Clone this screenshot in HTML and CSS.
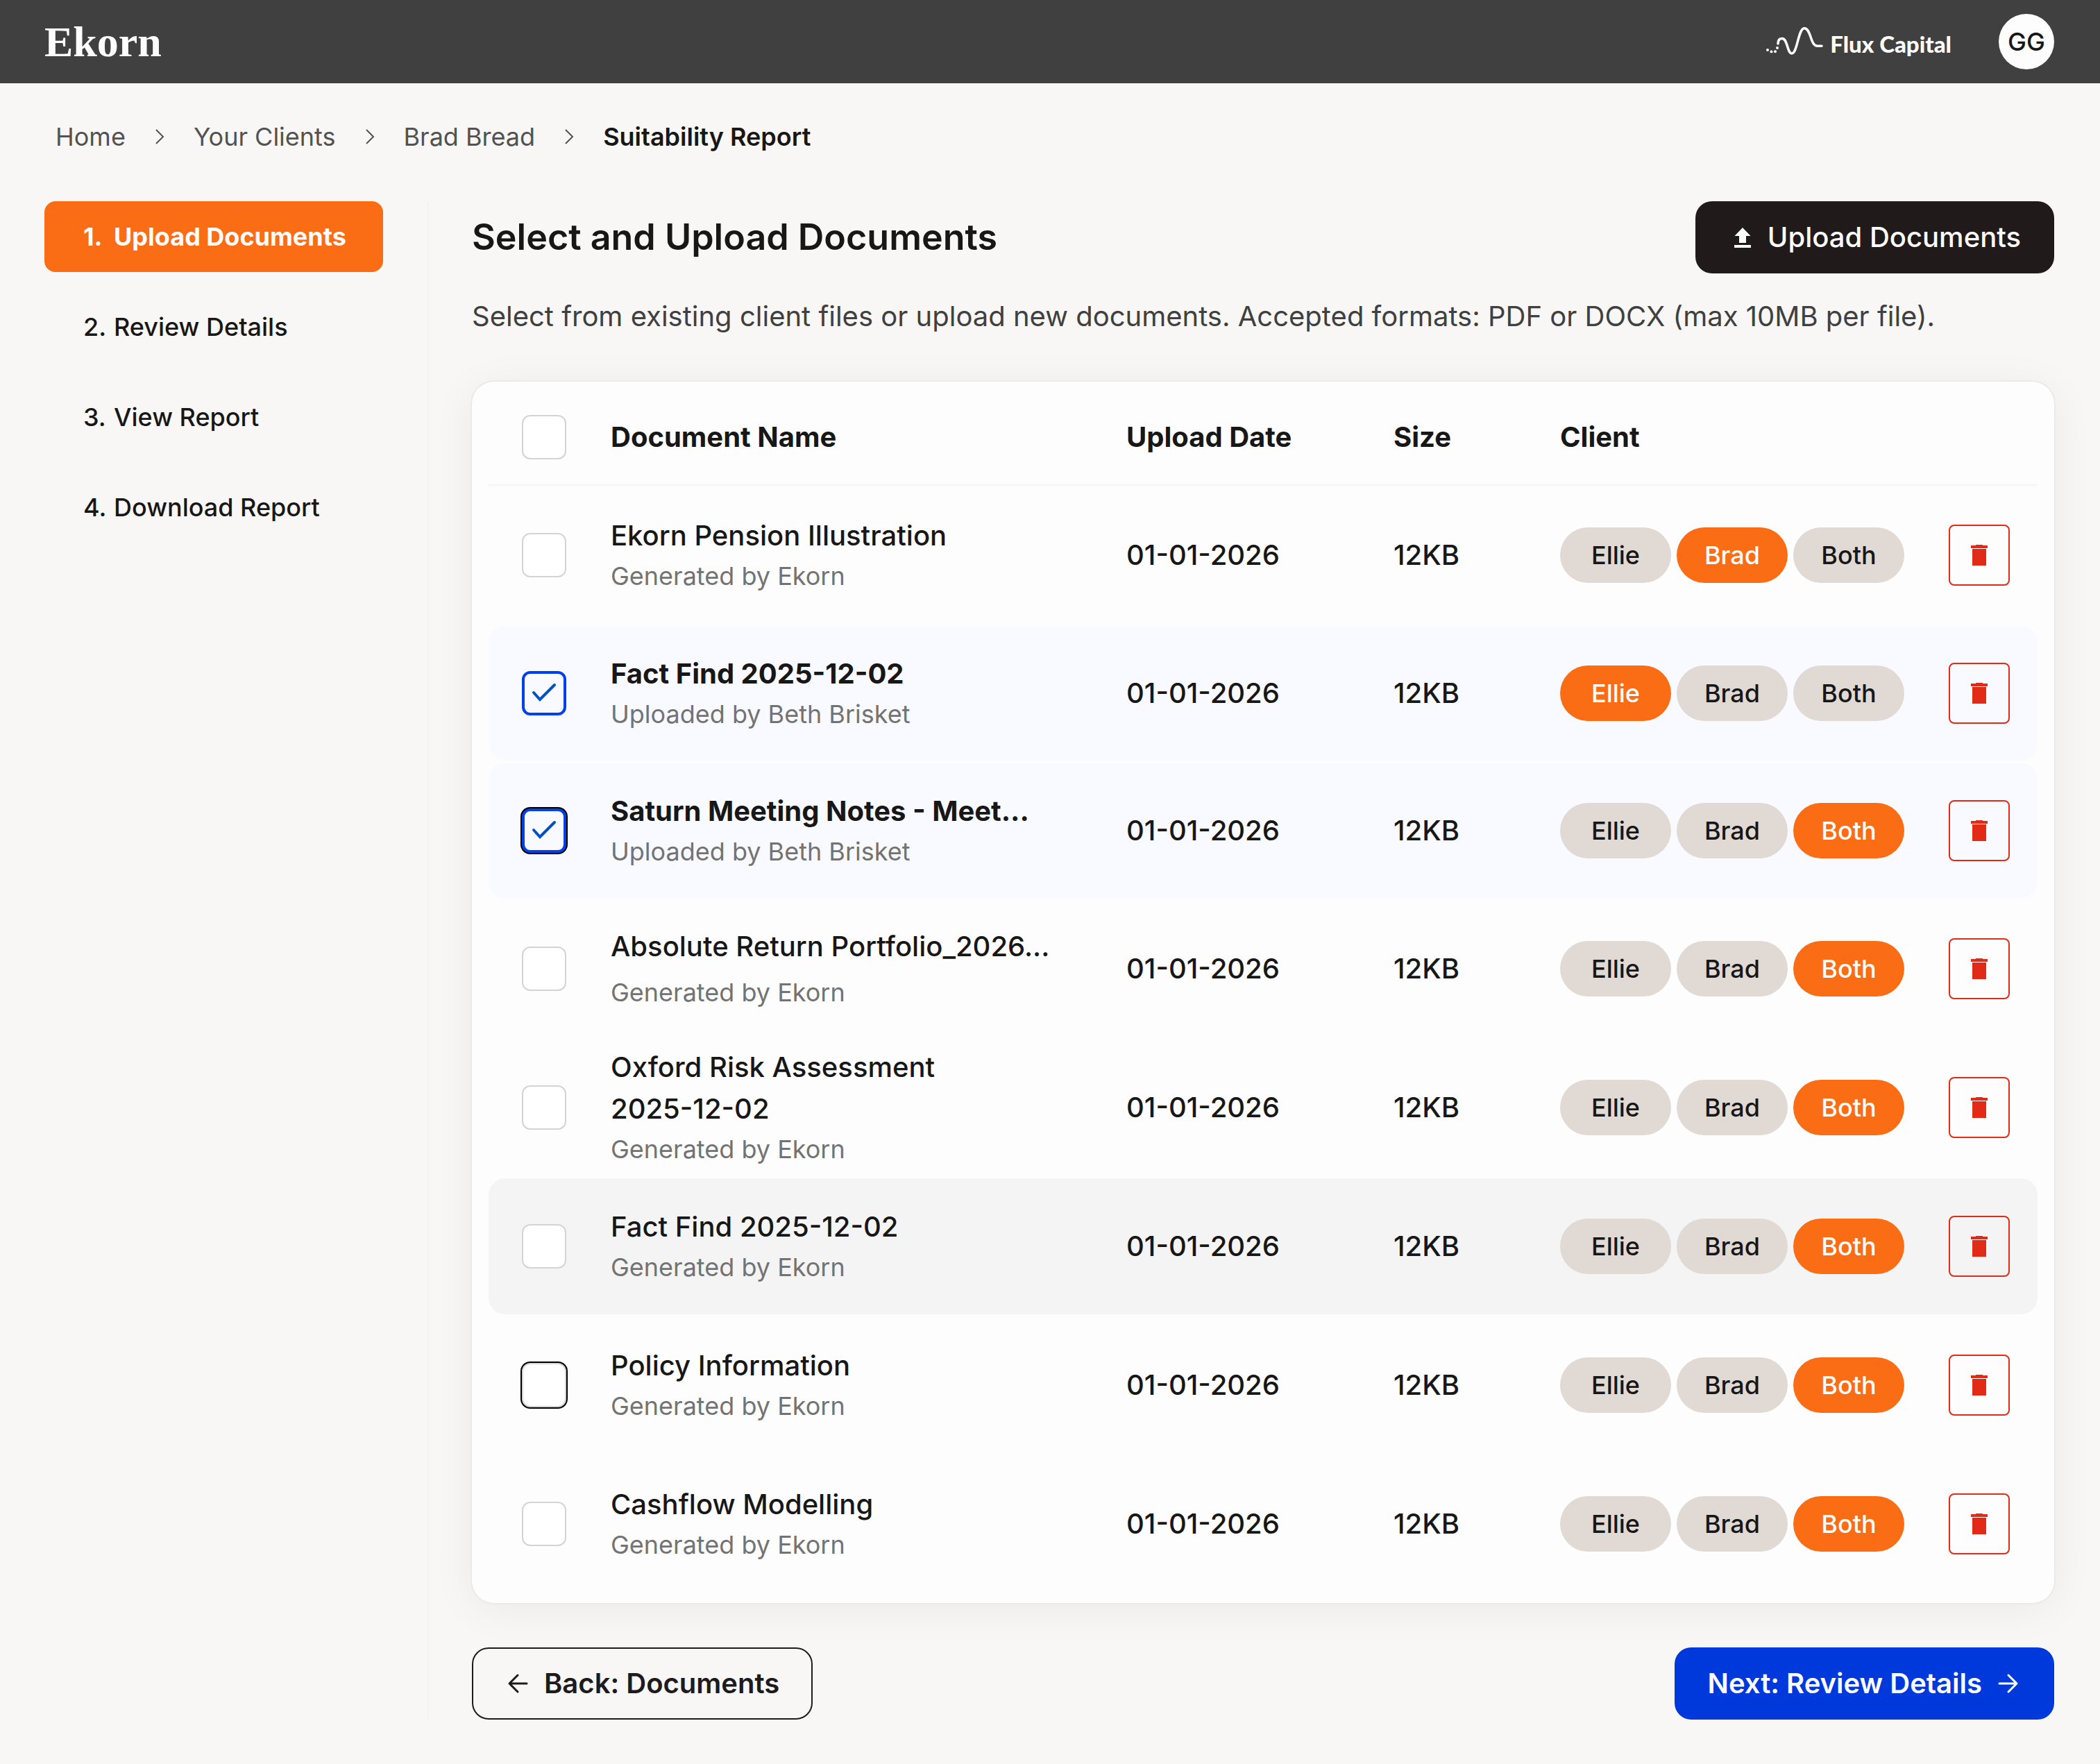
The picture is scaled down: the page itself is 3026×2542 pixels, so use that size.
FILE: index.html
```html
<!DOCTYPE html>
<html lang="en">
<head>
<meta charset="utf-8">
<title>Suitability Report - Ekorn</title>
<meta name="viewport" content="width=device-width, initial-scale=1">
<link rel="stylesheet" href="styles.css">
</head>
<body>
<svg class="sprite" aria-hidden="true">
  <symbol id="chevron" viewBox="0 0 32 32"><path d="M11 6l10 10-10 10" fill="none" stroke="currentColor" stroke-width="2"/></symbol>
  <symbol id="trash" viewBox="0 0 24 30"><path d="M7 0h10v1h7v4H0V1h7zM2 6h20v24H2z" fill="currentColor"/></symbol>
  <symbol id="upload" viewBox="0 0 40 40"><path d="M20 6l11.5 12H25v10H15V18H8.500zM8 31h24v4H8z" fill="currentColor"/></symbol>
  <symbol id="arrow" viewBox="0 0 40 40"><path d="M9 20h24M22 8l12 12-12 12" fill="none" stroke="currentColor" stroke-width="3" stroke-linecap="round" stroke-linejoin="round"/></symbol>
</svg>

<header class="topbar">
  <a class="brand" href="#">Ekorn</a>
  <div class="account">
    <a class="firm" href="#">
      <svg class="firm-mark" viewBox="0 0 82 40" aria-hidden="true">
        <path d="M17 27C17 21 20 19.500 23 19.500C31 19.500 30 41 37 41C45 41 46 4.700 55 4.700C65 4.700 63 30.300 74 30.300H80" fill="none" stroke="currentColor" stroke-width="3.500" stroke-linecap="round"/>
        <g fill="currentColor"><circle cx="2" cy="36" r="2"/><circle cx="7.500" cy="38.500" r="2"/><circle cx="13" cy="38.300" r="2"/><circle cx="16" cy="33" r="2"/></g>
      </svg>
      <span>Flux Capital</span>
    </a>
    <button class="avatar" type="button" aria-label="Account GG">GG</button>
  </div>
</header>

<nav class="crumbs" aria-label="Breadcrumb">
  <a href="#">Home</a>
  <svg class="chevron"><use href="#chevron"/></svg>
  <a href="#">Your Clients</a>
  <svg class="chevron"><use href="#chevron"/></svg>
  <a href="#">Brad Bread</a>
  <svg class="chevron"><use href="#chevron"/></svg>
  <a class="current" href="#" aria-current="page">Suitability Report</a>
</nav>

<div class="layout">
  <nav class="steps" aria-label="Steps">
    <a class="step active" href="#"><span class="number">1.</span>Upload Documents</a>
    <a class="step" href="#"><span class="number">2.</span>Review Details</a>
    <a class="step" href="#"><span class="number">3.</span>View Report</a>
    <a class="step" href="#"><span class="number">4.</span>Download Report</a>
  </nav>

  <main class="content">
    <div class="title-row">
      <h1>Select and Upload Documents</h1>
      <button class="button dark" type="button"><svg class="icon"><use href="#upload"/></svg>Upload Documents</button>
    </div>
    <p class="intro">Select from existing client files or upload new documents. Accepted formats: PDF or DOCX (max 10MB per file).</p>

    <section class="card">
      <table class="documents">
        <colgroup><col class="col-check"><col><col class="col-date"><col class="col-size"><col class="col-client"><col class="col-delete"></colgroup>
        <thead>
          <tr>
            <th><input class="check" type="checkbox" aria-label="Select all documents"></th>
            <th scope="col">Document Name</th>
            <th scope="col">Upload Date</th>
            <th scope="col">Size</th>
            <th scope="col">Client</th>
            <th></th>
          </tr>
        </thead>
        <tbody>
          <tr>
            <td><input class="check" type="checkbox" id="doc1"></td>
            <td><label class="name" for="doc1">Ekorn Pension Illustration</label><span class="source">Generated by Ekorn</span></td>
            <td>01-01-2026</td><td>12KB</td>
            <td><div class="pills"><button class="pill" type="button">Ellie</button><button class="pill on" type="button">Brad</button><button class="pill" type="button">Both</button></div></td>
            <td><button class="delete" type="button" aria-label="Delete"><svg><use href="#trash"/></svg></button></td>
          </tr>
          <tr class="selected">
            <td><input class="check" type="checkbox" id="doc2" checked></td>
            <td><label class="name" for="doc2">Fact Find 2025-12-02</label><span class="source">Uploaded by Beth Brisket</span></td>
            <td>01-01-2026</td><td>12KB</td>
            <td><div class="pills"><button class="pill on" type="button">Ellie</button><button class="pill" type="button">Brad</button><button class="pill" type="button">Both</button></div></td>
            <td><button class="delete" type="button" aria-label="Delete"><svg><use href="#trash"/></svg></button></td>
          </tr>
          <tr class="selected">
            <td><input class="check focused" type="checkbox" id="doc3" checked></td>
            <td><label class="name" for="doc3">Saturn Meeting Notes - Meet...</label><span class="source">Uploaded by Beth Brisket</span></td>
            <td>01-01-2026</td><td>12KB</td>
            <td><div class="pills"><button class="pill" type="button">Ellie</button><button class="pill" type="button">Brad</button><button class="pill on" type="button">Both</button></div></td>
            <td><button class="delete" type="button" aria-label="Delete"><svg><use href="#trash"/></svg></button></td>
          </tr>
          <tr>
            <td><input class="check" type="checkbox" id="doc4"></td>
            <td><label class="name truncated" for="doc4">Absolute Return Portfolio_2026...</label><span class="source">Generated by Ekorn</span></td>
            <td>01-01-2026</td><td>12KB</td>
            <td><div class="pills"><button class="pill" type="button">Ellie</button><button class="pill" type="button">Brad</button><button class="pill on" type="button">Both</button></div></td>
            <td><button class="delete" type="button" aria-label="Delete"><svg><use href="#trash"/></svg></button></td>
          </tr>
          <tr>
            <td><input class="check" type="checkbox" id="doc5"></td>
            <td><label class="name" for="doc5">Oxford Risk Assessment <span class="date">2025-12-02</span></label><span class="source">Generated by Ekorn</span></td>
            <td>01-01-2026</td><td>12KB</td>
            <td><div class="pills"><button class="pill" type="button">Ellie</button><button class="pill" type="button">Brad</button><button class="pill on" type="button">Both</button></div></td>
            <td><button class="delete" type="button" aria-label="Delete"><svg><use href="#trash"/></svg></button></td>
          </tr>
          <tr class="hovered">
            <td><input class="check" type="checkbox" id="doc6"></td>
            <td><label class="name" for="doc6">Fact Find 2025-12-02</label><span class="source">Generated by Ekorn</span></td>
            <td>01-01-2026</td><td>12KB</td>
            <td><div class="pills"><button class="pill" type="button">Ellie</button><button class="pill" type="button">Brad</button><button class="pill on" type="button">Both</button></div></td>
            <td><button class="delete" type="button" aria-label="Delete"><svg><use href="#trash"/></svg></button></td>
          </tr>
          <tr>
            <td><input class="check focused" type="checkbox" id="doc7"></td>
            <td><label class="name" for="doc7">Policy Information</label><span class="source">Generated by Ekorn</span></td>
            <td>01-01-2026</td><td>12KB</td>
            <td><div class="pills"><button class="pill" type="button">Ellie</button><button class="pill" type="button">Brad</button><button class="pill on" type="button">Both</button></div></td>
            <td><button class="delete" type="button" aria-label="Delete"><svg><use href="#trash"/></svg></button></td>
          </tr>
          <tr>
            <td><input class="check" type="checkbox" id="doc8"></td>
            <td><label class="name" for="doc8">Cashflow Modelling</label><span class="source">Generated by Ekorn</span></td>
            <td>01-01-2026</td><td>12KB</td>
            <td><div class="pills"><button class="pill" type="button">Ellie</button><button class="pill" type="button">Brad</button><button class="pill on" type="button">Both</button></div></td>
            <td><button class="delete" type="button" aria-label="Delete"><svg><use href="#trash"/></svg></button></td>
          </tr>
        </tbody>
      </table>
    </section>

    <div class="actions">
      <button class="button outline" type="button"><svg class="icon back"><use href="#arrow"/></svg>Back: Documents</button>
      <button class="button primary" type="button">Next: Review Details<svg class="icon"><use href="#arrow"/></svg></button>
    </div>
  </main>
</div>
</body>
</html>
```
FILE: styles.css
```css
*, *::before, *::after { box-sizing: border-box; }

body {
  margin: 0;
  background: #f8f7f5;
  color: #171717;
  font-family: Inter, "Liberation Sans", sans-serif;
  font-size: 40px;
  line-height: 60px;
}

button { font: inherit; cursor: pointer; }
a { color: inherit; text-decoration: none; }
svg { display: block; flex: none; }
.sprite { position: absolute; width: 0; height: 0; }

/* Top bar */
.topbar {
  display: flex;
  align-items: center;
  justify-content: space-between;
  height: 120px;
  padding: 0 66px 0 64px;
  background: #404040;
  color: #fdfdfd;
}
.brand { font-family: "Liberation Serif", serif; font-weight: 700; font-size: 62px; }
.account { display: flex; align-items: center; gap: 68px; }
.firm {
  display: flex;
  align-items: baseline;
  gap: 10px;
  padding-top: 6px;
  font-family: Lato, sans-serif;
  font-size: 33px;
  font-weight: 900;
}
.firm-mark { width: 82px; height: 40px; overflow: visible; }
.avatar {
  width: 80px;
  height: 80px;
  padding: 0;
  border: 0;
  border-radius: 50%;
  background: #fdfdfd;
  color: #171717;
  font-size: 36px;
  font-weight: 500;
}

/* Breadcrumb */
.crumbs {
  display: flex;
  align-items: center;
  gap: 33px;
  padding: 47px 80px 33px;
  font-size: 36px;
  color: #525252;
}
.crumbs .current { color: #171717; font-weight: 600; }
.chevron { width: 32px; height: 32px; }

/* Page columns */
.layout { display: flex; padding: 30px 66px 64px 64px; }
.steps {
  display: flex;
  flex-direction: column;
  gap: 28px;
  flex: 0 0 554px;
  padding-right: 64px;
  border-right: 2px solid #f3f2f1;
}
.step {
  display: flex;
  padding: 21px 48px 21px 56px;
  border-radius: 16px;
  font-size: 36px;
  font-weight: 500;
  white-space: nowrap;
}
.step.active { background: #fb6d14; color: #fdfdfd; font-weight: 700; }
.number { flex: 0 0 44px; }
.content { flex: 1; min-width: 0; padding-left: 62px; }

.title-row { display: flex; align-items: center; justify-content: space-between; }
h1 { margin: 0; font-size: 52px; font-weight: 600; }
.intro { margin: 32px 0 64px; color: #404040; }

/* Buttons */
.button {
  display: flex;
  align-items: center;
  gap: 16px;
  height: 104px;
  padding: 0 48px;
  border: 0;
  border-radius: 24px;
  font-size: 40px;
  font-weight: 600;
}
.button.dark { background: #211a1a; color: #fdfdfd; font-weight: 500; }
.button.outline { padding: 0 46px; border: 2px solid #211a1a; background: transparent; color: #211a1a; }
.button.primary { background: #0039db; color: #fdfdfd; }
.icon { width: 40px; height: 40px; }
.icon.back { transform: rotate(180deg); }
.actions { display: flex; justify-content: space-between; margin-top: 64px; }

/* Documents table */
.card {
  padding: 8px 24px 12px;
  border-radius: 32px;
  background: #fdfdfd;
  box-shadow: 0 0 0 2px #ece9e6, 0 8px 64px rgba(0, 0, 0, 0.06);
}
.documents { width: 100%; table-layout: fixed; border-collapse: separate; border-spacing: 0 4px; }
.col-check { width: 144px; }
.col-date { width: 385px; }
.col-size { width: 240px; }
.col-client { width: 560px; }
.col-delete { width: 160px; }
th, td { padding: 0 32px; text-align: left; vertical-align: middle; }
th:first-child, td:first-child { padding: 0 32px 0 48px; }
th { height: 136px; font-weight: 700; box-shadow: 0 2px 0 #f4f4f4; }
td { height: 196px; font-weight: 500; }
td:first-child { border-radius: 24px 0 0 24px; }
td:last-child { border-radius: 0 24px 24px 0; }
.selected td { height: 194px; background: #f9faff; }
.selected .name { font-weight: 700; }
.hovered td { background: #f4f4f4; }

.name { display: block; max-width: 640px; }
.name.truncated { margin-bottom: 8px; white-space: nowrap; }
.date { white-space: nowrap; }
.source { display: block; font-size: 36px; line-height: 56px; font-weight: 400; color: #737373; }

.check {
  display: block;
  appearance: none;
  width: 64px;
  height: 64px;
  margin: 0;
  border: 2px solid #d4d4d4;
  border-radius: 12px;
  background: #fff;
}
.check:checked {
  border: 4px solid #0040e8;
  background: #f9faff url("data:image/svg+xml,%3Csvg xmlns='http://www.w3.org/2000/svg' viewBox='0 0 56 56'%3E%3Cpath d='M13 27l9 10 21-21' fill='none' stroke='%230050c8' stroke-width='4' stroke-linecap='round'/%3E%3C/svg%3E") center / 56px 56px no-repeat;
}
.check.focused { box-shadow: 0 0 0 2px #000; }

.pills { display: flex; gap: 8px; }
.pill {
  width: 160px;
  height: 80px;
  padding: 0;
  border: 0;
  border-radius: 40px;
  background: #e0d9d4;
  color: #171717;
  font-size: 36px;
  font-weight: 500;
}
.pill.on { background: #fb6d14; color: #fdfdfd; }
.delete {
  display: grid;
  place-items: center;
  width: 88px;
  height: 88px;
  padding: 0;
  border: 2px solid #e12b17;
  border-radius: 8px;
  background: transparent;
  color: #e12b17;
}
.delete svg { width: 24px; height: 30px; }
```
